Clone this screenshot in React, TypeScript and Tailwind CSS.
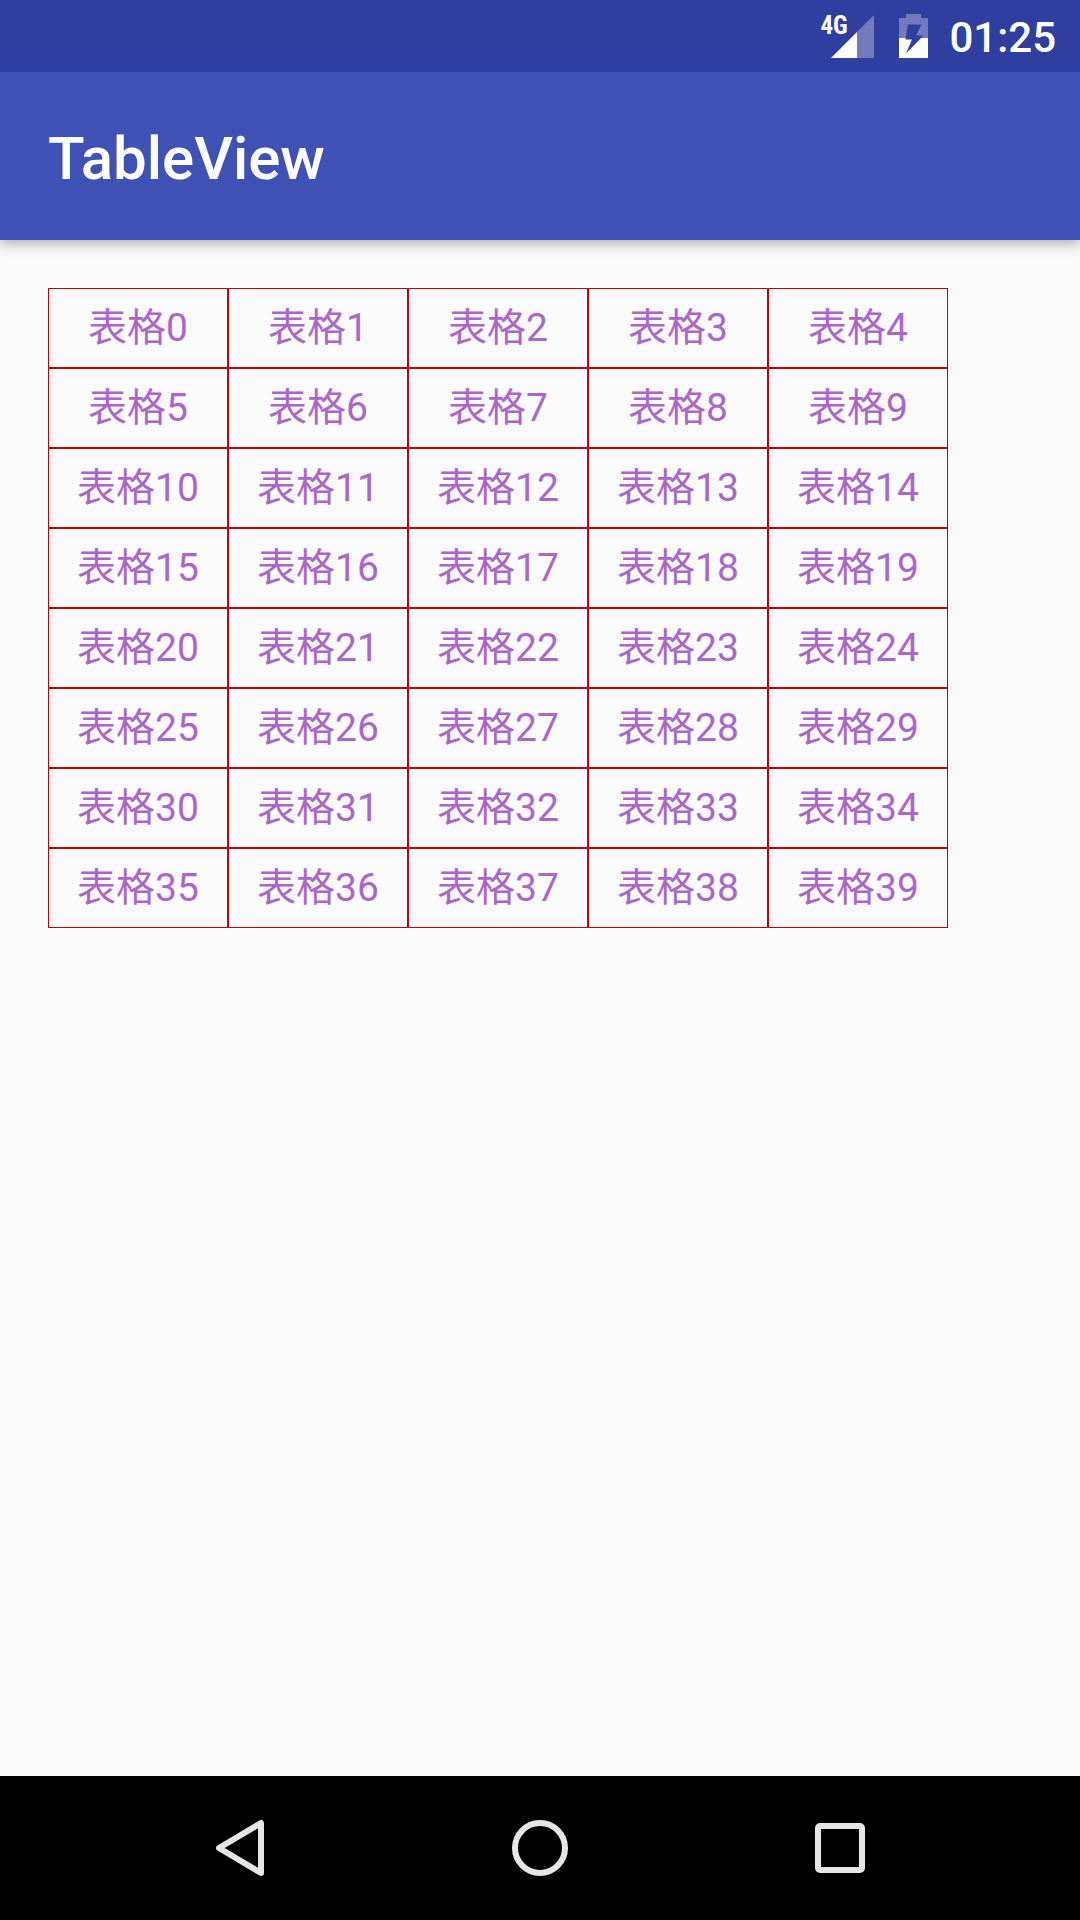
const COLUMNS = 5;
const ROWS = 8;

function SignalIcon() {
  return (
    <div className="relative h-[43px] w-[43px]">
      <svg viewBox="0 0 43 43" className="h-full w-full" aria-hidden="true">
        <path d="M26 17 L43 0 V43 H26 Z" fill="#737bbd" />
        <path d="M0 43 L26 17 V43 Z" fill="#ffffff" />
      </svg>
      <span className="absolute -left-[11px] -top-px font-['Roboto_Condensed','Liberation_Sans_Narrow',Roboto,sans-serif] text-[25px] leading-6 font-bold">
        4G
      </span>
    </div>
  );
}

function BatteryIcon() {
  return (
    <svg viewBox="0 0 29 44" className="h-11 w-[29px]" aria-hidden="true">
      <path d="M7 0 H22 V4 H29 V24 H0 V4 H7 Z" fill="#737bbd" />
      <path d="M0 24 H29 V44 H0 Z" fill="#ffffff" />
      <path d="M9 10.5 H22.5 L17 21.5 H24.5 L7 39.5 L13 25.5 H6.5 Z" fill="#303f9f" />
    </svg>
  );
}

function StatusBar() {
  return (
    <div className="relative z-10 flex h-[72px] items-center justify-end bg-[#303f9f] pr-6 text-white">
      <SignalIcon />
      <div className="ml-[25px]">
        <BatteryIcon />
      </div>
      <time className="ml-[21px] pt-1 text-[42px] leading-[50px] font-medium">01:25</time>
    </div>
  );
}

function TableView() {
  return (
    <table className="w-[900px] max-w-full table-fixed border-separate border-spacing-0">
      <tbody>
        {Array.from({ length: ROWS }, (_, row) => (
          <tr key={row}>
            {Array.from({ length: COLUMNS }, (_, col) => (
              <td
                key={col}
                className="h-20 border border-[#cc0000] p-0 text-center align-middle text-[39px] leading-[50px] text-[#aa66cc]"
              >
                {`表格${row * COLUMNS + col}`}
              </td>
            ))}
          </tr>
        ))}
      </tbody>
    </table>
  );
}

function NavigationBar() {
  const button = "flex flex-1 items-center justify-center";
  const icon = "size-[60px] fill-none stroke-[#e6e6e6] stroke-[6px]";
  return (
    <nav className="flex h-36 bg-black px-[90px]">
      <button type="button" aria-label="Back" className={button}>
        <svg viewBox="0 0 60 60" className={icon} strokeLinejoin="round">
          <path d="M51 5 V55 L9 30 Z" />
        </svg>
      </button>
      <button type="button" aria-label="Home" className={button}>
        <svg viewBox="0 0 60 60" className={icon}>
          <circle cx="30" cy="30" r="25" />
        </svg>
      </button>
      <button type="button" aria-label="Recent apps" className={button}>
        <svg viewBox="0 0 60 60" className={icon}>
          <rect x="8" y="8" width="44" height="44" rx="2" />
        </svg>
      </button>
    </nav>
  );
}

export default function App() {
  return (
    <div className="flex min-h-screen flex-col bg-[#fafafa] font-[Roboto,'Noto_Sans_CJK_SC',sans-serif]">
      <StatusBar />
      <header className="flex h-[168px] items-center bg-[#3f51b5] px-12 shadow-[0_4px_12px_rgba(0,0,0,0.3)]">
        <h1 className="pt-1.5 text-[60px] leading-[70px] font-medium text-white">TableView</h1>
      </header>
      <main className="flex-1 p-12">
        <TableView />
      </main>
      <NavigationBar />
    </div>
  );
}
